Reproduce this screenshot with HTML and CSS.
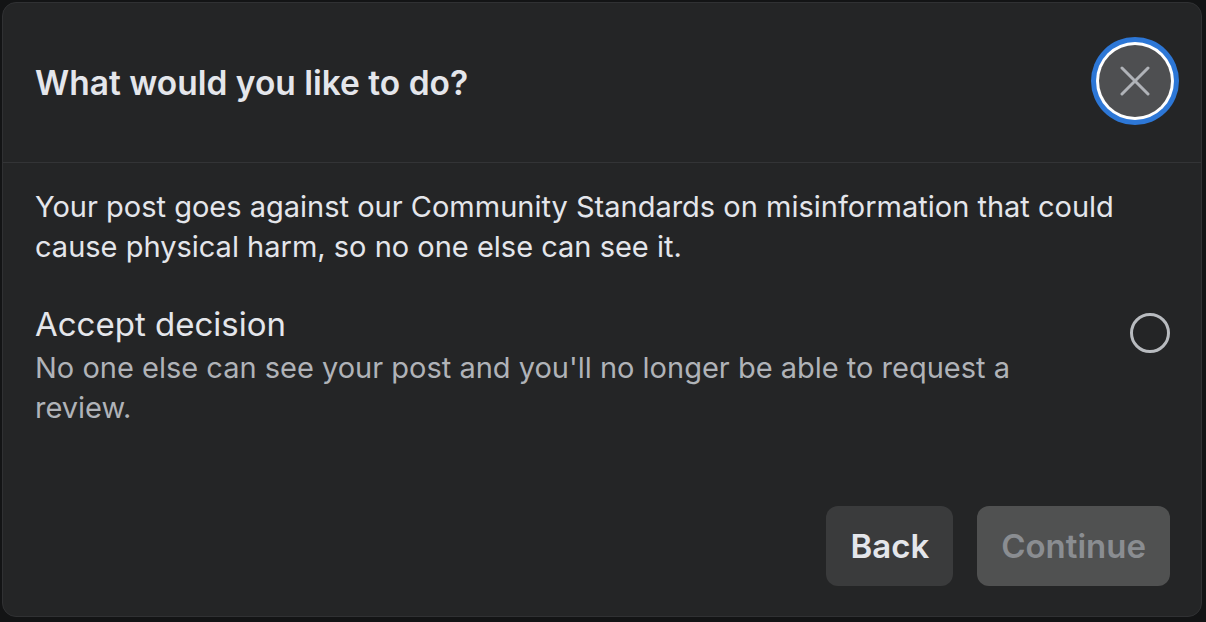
FILE: index.html
```html
<!DOCTYPE html>
<html lang="en">
<head>
<meta charset="utf-8">
<title>What would you like to do?</title>
<link rel="stylesheet" href="styles.css">
</head>
<body>
  <div class="modal" role="dialog" aria-labelledby="dlg-title">
    <header class="modal-header">
      <h2 class="modal-title" id="dlg-title">What would you like to do?</h2>
      <button class="close-btn" aria-label="Close">
        <svg width="30" height="30" viewBox="0 0 30 30" aria-hidden="true">
          <path d="M2 2 L28 28 M28 2 L2 28" stroke="#b0b3b8" stroke-width="3" stroke-linecap="round" fill="none"/>
        </svg>
      </button>
    </header>
    <div class="modal-body">
      <p class="intro">Your post goes against our Community Standards on misinformation that could cause physical harm, so no one else can see it.</p>
      <label class="option">
        <div class="option-text">
          <div class="option-title">Accept decision</div>
          <div class="option-desc">No one else can see your post and you'll no longer be able to request a review.</div>
        </div>
        <span class="radio"></span>
      </label>
    </div>
    <footer class="modal-footer">
      <button class="btn btn-secondary">Back</button>
      <button class="btn btn-disabled" disabled>Continue</button>
    </footer>
  </div>
</body>
</html>
```
FILE: styles.css
```css
* { box-sizing: border-box; }
html, body { margin: 0; height: 100%; }
body {
  background: #131415;
  font-family: Inter, "Noto Sans", "Liberation Sans", sans-serif;
  padding: 2px 4px 5px 2px;
  display: flex;
}
.modal {
  flex: 1;
  display: flex;
  flex-direction: column;
  background: #242526;
  border: 1px solid #303133;
  border-radius: 14px;
  overflow: hidden;
}
.modal-header {
  height: 160px;
  flex: none;
  display: flex;
  align-items: center;
  justify-content: space-between;
  padding: 0 30px 0 32px;
  border-bottom: 1px solid #333436;
}
.modal-title {
  margin: 0;
  font-size: 33.5px;
  font-weight: 600;
  color: #e4e6eb;
}
.close-btn {
  border: none;
  background: #4e4f51;
  width: 72px;
  height: 72px;
  border-radius: 50%;
  box-shadow: 0 0 0 3px #ffffff, 0 0 0 8px #2d77d6;
  display: flex;
  align-items: center;
  justify-content: center;
  padding: 0;
  margin-top: -4px;
  cursor: pointer;
}
.modal-body {
  flex: 1;
  padding: 24px 31px 0 32px;
}
.intro {
  margin: 0;
  font-size: 29px;
  line-height: 40px;
  color: #e4e6eb;
}
.option {
  display: flex;
  align-items: flex-start;
  justify-content: space-between;
  margin-top: 37px;
}
.option-text { max-width: 1000px; }
.option-title {
  font-size: 33px;
  line-height: 40px;
  color: #e4e6eb;
}
.option-desc {
  font-size: 29px;
  line-height: 40px;
  color: #b0b3b8;
  margin-top: 4px;
}
.radio {
  width: 40px;
  height: 40px;
  border-radius: 50%;
  border: 3px solid #b8bbbf;
  margin-top: 9px;
  flex: none;
}
.modal-footer {
  display: flex;
  justify-content: flex-end;
  gap: 24px;
  padding: 0 31px 30px 0;
}
.btn {
  height: 80px;
  border: none;
  border-radius: 12px;
  padding: 0 24px;
  font-family: inherit;
  font-size: 33px;
  font-weight: 600;
}
.btn-secondary {
  background: #3a3b3c;
  color: #e4e6eb;
}
.btn-disabled {
  background: #505151;
  color: #8a8d91;
}
```
